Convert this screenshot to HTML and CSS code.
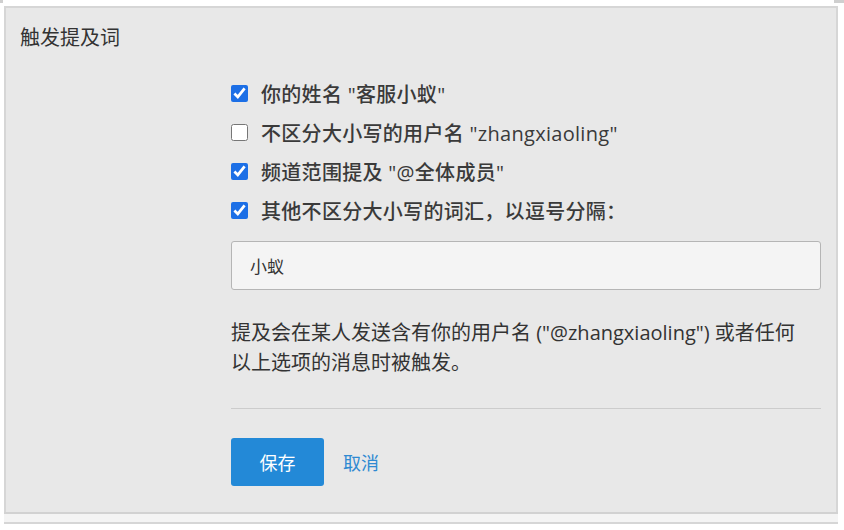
FILE: index.html
```html
<html>
    <head>
        <meta charset="UTF-8">
        <title>触发提及词</title>
        <link rel="stylesheet" href="styles.css">
    </head>
    <body>
        <div class="corner corner-left"></div>
        <div class="corner corner-right"></div>
        <div class="panel">
            <div class="panel-title">触发提及词</div>
            <div class="panel-body">
                <label class="check-row">
                    <input type="checkbox" checked>
                    <span>你的姓名 "客服小蚁"</span>
                </label>
                <label class="check-row">
                    <input type="checkbox">
                    <span>不区分大小写的用户名 "zhangxiaoling"</span>
                </label>
                <label class="check-row">
                    <input type="checkbox" checked>
                    <span>频道范围提及 "@全体成员"</span>
                </label>
                <label class="check-row">
                    <input type="checkbox" checked>
                    <span>其他不区分大小写的词汇，以逗号分隔：</span>
                </label>
                <input class="keywords" type="text" value="小蚁">
                <p class="help">提及会在某人发送含有你的用户名 ("@zhangxiaoling") 或者任何以上选项的消息时被触发。</p>
                <div class="divider"></div>
                <div class="actions">
                    <button class="btn-save">保存</button>
                    <a class="btn-cancel" href="#">取消</a>
                </div>
            </div>
            <div class="panel-footer"></div>
        </div>
    </body>
</html>
```

FILE: styles.css
```css
body {
    margin: 0;
    background-color: #ffffff;
    font-family: "Open Sans", "Noto Sans CJK SC", sans-serif;
    color: #333333;
}
.corner {
    position: absolute;
    top: 0;
    height: 3px;
    background-color: #cfcfcf;
}
.corner-left {
    left: 0;
    width: 3px;
}
.corner-right {
    left: 834px;
    width: 10px;
}
.panel {
    margin: 6px 6px 0 4px;
    border: 2px solid #d6d6d6;
    border-bottom: none;
    background-color: #e8e8e8;
}
.panel-title {
    padding: 17px 0 0 14px;
    font-size: 20px;
    line-height: 26px;
    color: #333333;
}
.panel-body {
    padding: 23px 15px 26px 225px;
}
.check-row {
    display: flex;
    align-items: center;
    height: 39px;
    font-size: 20px;
    font-weight: 500;
    letter-spacing: 0.3px;
    color: #3a3a3a;
}
.check-row input {
    width: 17px;
    height: 17px;
    margin: 0 13px 0 0;
    accent-color: #1c6fe6;
}
.keywords {
    display: block;
    box-sizing: border-box;
    width: 100%;
    height: 49px;
    margin-top: 11px;
    padding: 0 18px;
    border: 1px solid #b5b5b5;
    border-radius: 3px;
    background-color: #f4f4f4;
    font-family: "Open Sans", "Noto Sans CJK SC", sans-serif;
    font-size: 17px;
    color: #333333;
}
.help {
    max-width: 580px;
    margin: 28px 0 0 0;
    font-size: 20px;
    line-height: 30px;
    color: #333333;
}
.divider {
    margin-top: 30px;
    height: 1px;
    background-color: #cccccc;
}
.actions {
    display: flex;
    align-items: center;
    gap: 19px;
    margin-top: 29px;
}
.btn-save {
    width: 93px;
    height: 48px;
    border: none;
    border-radius: 3px;
    background-color: #2389d7;
    color: #ffffff;
    font-family: "Open Sans", "Noto Sans CJK SC", sans-serif;
    font-size: 18px;
}
.btn-cancel {
    color: #2f8ad2;
    font-size: 18px;
    text-decoration: none;
}
.panel-footer {
    height: 8px;
    border-top: 2px solid #d2d2d2;
    border-bottom: 2px solid #d6d6d6;
    background-color: #f4f4f4;
    margin: 0 -2px;
}
```
